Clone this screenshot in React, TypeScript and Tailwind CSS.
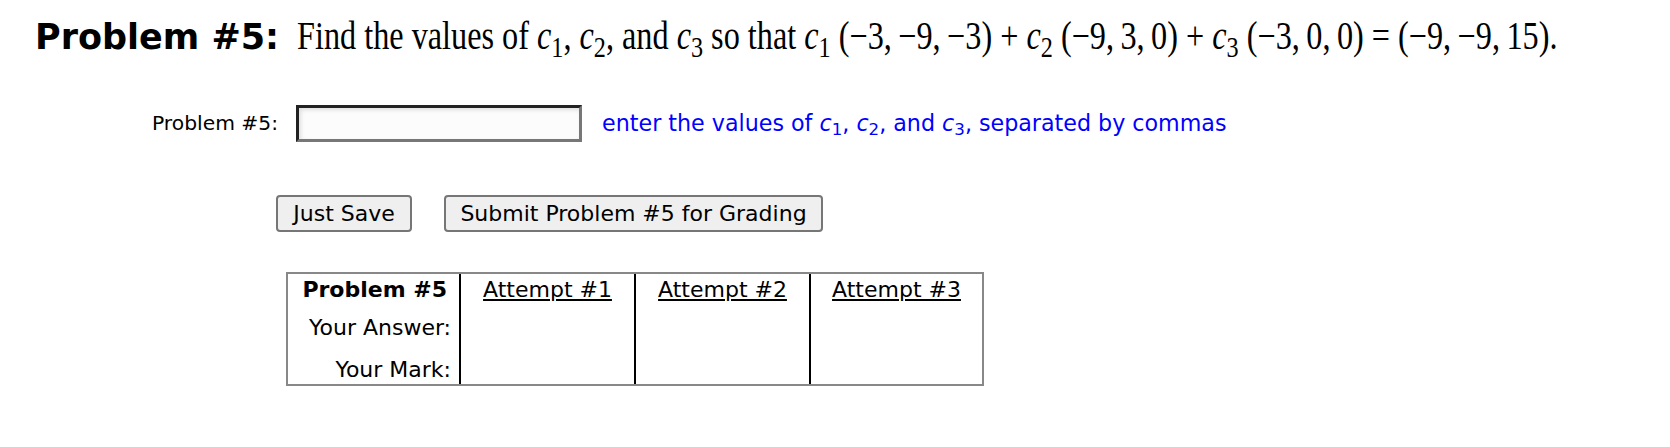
import React from "react";

function C({ n }: { n: number }) {
  return (
    <span>
      <span className="italic">c</span>
      <sub className="not-italic">{n}</sub>
    </span>
  );
}

export default function App() {
  return (
    <div className="w-full min-h-[447px] overflow-hidden bg-white text-black font-['DejaVu_Sans','Verdana',sans-serif]">
      <div className="pt-[14px] pl-[35px] flex items-baseline whitespace-nowrap h-[58px]">
        <span className="text-[35px] font-bold leading-[44px]">Problem #5:</span>
        <span className="ml-[18px] inline-block origin-left scale-x-[0.806] font-['Liberation_Serif','Times_New_Roman',serif] text-[40px] leading-[44px]">
          Find the values of <C n={1} />, <C n={2} />, and <C n={3} /> so that <C n={1} /> (−3,&#8201;−9,&#8201;−3) + <C n={2} /> (−9,&#8201;3,&#8201;0) + <C n={3} /> (−3,&#8201;0,&#8201;0) = (−9,&#8201;−9,&#8201;15).
        </span>
      </div>

      <div className="mt-[47px] pl-[152px] flex items-center h-[37px]">
        <span className="text-[20.3px]">Problem #5:</span>
        <input
          type="text"
          className="ml-[18px] w-[286px] h-[37px] border-[3px] border-t-[#222] border-l-[#222] border-b-[#777] border-r-[#777] bg-[#fcfcfc] shadow-[inset_2px_2px_4px_rgba(0,0,0,0.12)] outline-none"
        />
        <span className="ml-[20px] text-[22.2px] text-[#0000ff]">
          enter the values of <C n={1} />, <C n={2} />, and <C n={3} />, separated by commas
        </span>
      </div>

      <div className="mt-[53px] pl-[276px] flex items-center gap-[32px] text-[22px]">
        <button className="w-[136px] h-[37px] rounded-[4px] border-2 border-[#767676] bg-[#efefef] leading-none">
          Just Save
        </button>
        <button className="w-[379px] h-[37px] rounded-[4px] border-2 border-[#767676] bg-[#efefef] leading-none">
          Submit Problem #5 for Grading
        </button>
      </div>

      <div className="mt-[40px] ml-[286px] w-[698px] border-2 border-[#888] text-[22px] leading-[26px]">
        <div className="grid grid-cols-[171px_175px_175px_173px] grid-rows-[36px_39px_35px]">
          <div className="pt-[3px] text-right pr-[12px] font-bold">Problem #5</div>
          <div className="pt-[3px] text-center border-l-2 border-black underline">Attempt #1</div>
          <div className="pt-[3px] text-center border-l-2 border-black underline">Attempt #2</div>
          <div className="pt-[3px] text-center border-l-2 border-black underline">Attempt #3</div>

          <div className="pt-[5px] text-right pr-[8px]">Your Answer:</div>
          <div className="border-l-2 border-black"></div>
          <div className="border-l-2 border-black"></div>
          <div className="border-l-2 border-black"></div>

          <div className="pt-[8px] text-right pr-[8px]">Your Mark:</div>
          <div className="border-l-2 border-black"></div>
          <div className="border-l-2 border-black"></div>
          <div className="border-l-2 border-black"></div>
        </div>
      </div>
    </div>
  );
}
